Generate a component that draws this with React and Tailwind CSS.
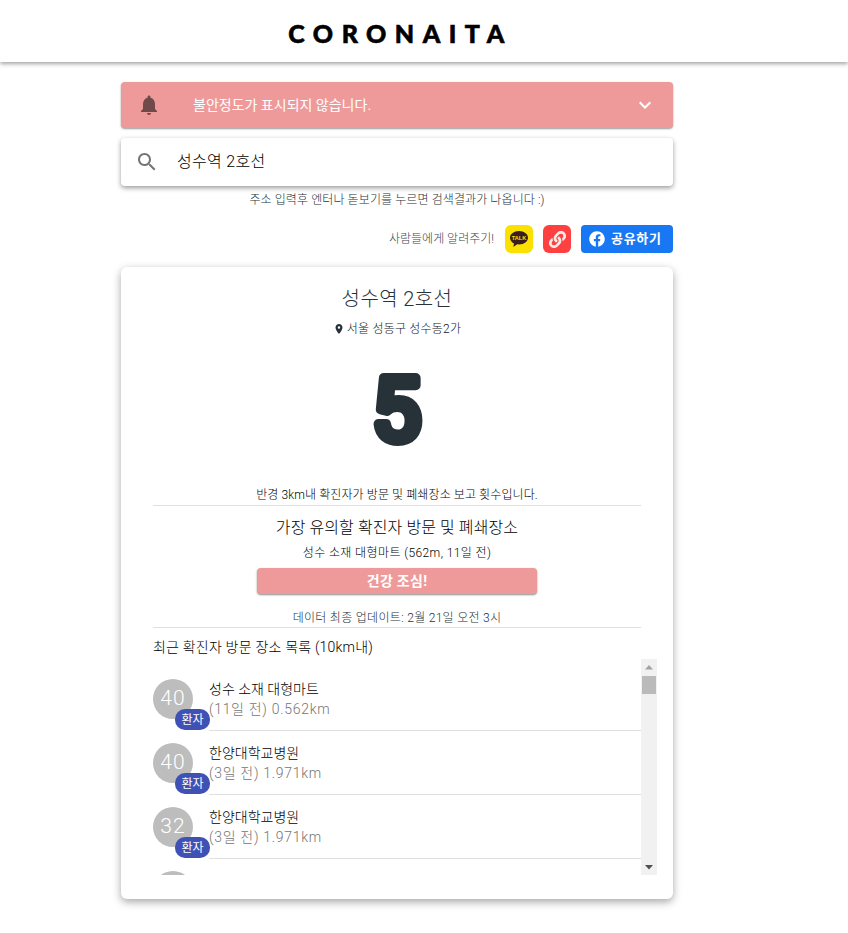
import React from "react";
import { FaFacebook, FaLink } from "react-icons/fa";

const Bell = () => (
  <svg width="24" height="24" viewBox="0 0 24 24" className="text-[#704a4a]" fill="currentColor"><path d="M12 22c1.1 0 2-.9 2-2h-4c0 1.1.89 2 2 2zm6-6v-5c0-3.07-1.64-5.64-4.5-6.32V4c0-.83-.67-1.5-1.5-1.5s-1.5.67-1.5 1.5v.68C7.63 5.36 6 7.92 6 11v5l-2 2v1h16v-1l-2-2z"/></svg>
);
const Chevron = () => (
  <svg width="24" height="24" viewBox="0 0 24 24" fill="#fff"><path d="M16.59 8.59 12 13.17 7.41 8.59 6 10l6 6 6-6z"/></svg>
);
const Search = () => (
  <svg width="24" height="24" viewBox="0 0 24 24" fill="#757575"><path d="M15.5 14h-.79l-.28-.27C15.41 12.59 16 11.11 16 9.5 16 5.91 13.09 3 9.5 3S3 5.91 3 9.5 5.91 16 9.5 16c1.61 0 3.09-.59 4.23-1.57l.27.28v.79l5 4.99L20.49 19l-4.99-5zm-6 0C7.01 14 5 11.99 5 9.5S7.01 5 9.5 5 14 7.01 14 9.5 11.99 14 9.5 14z"/></svg>
);
const Pin = () => (
  <svg width="12" height="12" viewBox="0 0 24 24" fill="#263238"><path d="M12 2C8.13 2 5 5.13 5 9c0 5.25 7 13 7 13s7-7.75 7-13c0-3.87-3.13-7-7-7zm0 9.5a2.5 2.5 0 0 1 0-5 2.5 2.5 0 0 1 0 5z"/></svg>
);
const Kakao = () => (
  <svg width="20" height="20" viewBox="0 0 20 20"><path fill="#3c1e1e" d="M10 2C4.9 2 1 5 1 8.7c0 2.4 1.600 4.500 4 5.700L4.300 18l3.900-2.700c.6.1 1.200.1 1.800.1 5.100 0 9-3 9-6.700S15.100 2 10 2z"/><text x="10" y="10.800" textAnchor="middle" fontSize="5.500" fontWeight="700" fill="#fae100" fontFamily="Liberation Sans">TALK</text></svg>
);
const Up = ({ color }) => (
  <svg width="16" height="16" viewBox="0 0 16 16" fill={color}><path d="M4 10.500 8 6l4 4.500z"/></svg>
);
const Down = ({ color }) => (
  <svg width="16" height="16" viewBox="0 0 16 16" fill={color}><path d="M4 6l4 4.500L12 6z"/></svg>
);

const rows = [
  ["40", "성수 소재 대형마트", "(11일 전) 0.562km"],
  ["40", "한양대학교병원", "(3일 전) 1.971km"],
  ["32", "한양대학교병원", "(3일 전) 1.971km"],
];

function Avatar({ n }) {
  return <div className="flex h-10 w-10 items-center justify-center rounded-full bg-[#bdbdbd] text-[21px] font-light tracking-[1px] text-white">{n}</div>;
}

function Row({ n, title, sub }) {
  return (
    <div className="flex h-16 shrink-0">
      <div className="relative w-14 shrink-0 pt-3">
        <Avatar n={n} />
        <div className="absolute left-[22px] top-[42px] flex h-[21px] w-[35px] items-center justify-center rounded-[10px] bg-[#3f51b5] text-xs text-white">환자</div>
      </div>
      <div className="min-w-0 flex-1 border-b border-[#e0e0e0] pt-[12px]">
        <div className="text-sm font-light leading-5 text-black">{title}</div>
        <div className="text-sm font-light leading-5 tracking-[0.7px] text-[#757575]">{sub}</div>
      </div>
    </div>
  );
}

export default function App() {
  return (
    <div className="min-h-[933px] bg-white font-['Roboto','Noto_Sans_CJK_KR',sans-serif] text-[#212121]">
      <header className="h-[62px] bg-white shadow-[0_2px_4px_rgba(0,0,0,0.35)]">
        <div className="flex h-full w-[794px] items-center justify-center pt-[5px] pl-[7px] font-['Lato',sans-serif] text-[25px] font-black tracking-[8.500px] text-black [-webkit-text-stroke:0.6px_black]">CORONAITA</div>
      </header>
      <main className="ml-[121px] flex w-[552px] flex-col pt-5">
        <div className="flex h-[46px] items-center rounded bg-[#ef9a9a] pl-4 pr-4 shadow-[0_1px_2px_rgba(0,0,0,0.4)]">
          <Bell />
          <div className="ml-[32px] flex-1 text-sm text-white">불안정도가 표시되지 않습니다.</div>
          <Chevron />
        </div>
        <div className="mt-[10px] flex h-12 items-center rounded bg-white pl-[14px] shadow-[0_2px_5px_rgba(0,0,0,0.4)]">
          <Search />
          <div className="ml-[18px] text-base font-light tracking-[0.3px] text-black">성수역 2호선</div>
        </div>
        <p className="mt-[6px] text-center text-xs font-light leading-4 tracking-[0.1px] text-[#263238]">주소 입력후 엔터나 돋보기를 누르면 검색결과가 나옵니다 :)</p>
        <div className="mt-[17px] flex h-7 items-center justify-end">
          <span className="text-xs font-light text-[#37474f]">사람들에게 알려주기!</span>
          <div className="ml-[11px] flex h-7 w-7 items-center justify-center rounded-md bg-[#fae100]"><Kakao /></div>
          <div className="ml-[10px] flex h-7 w-7 items-center justify-center rounded-md bg-[#ff4040]"><FaLink size={17} color="#ffe9e9" /></div>
          <div className="ml-[10px] flex h-7 w-[92px] items-center gap-[6px] rounded bg-[#1877f2] pl-2 text-[13px] font-bold tracking-[0.7px] text-white"><FaFacebook size={16} />공유하기</div>
        </div>
        <section className="mt-[14px] h-[632px] rounded-md bg-white px-8 pt-[17px] shadow-[0_3px_8px_rgba(0,0,0,0.35)]">
          <h1 className="text-center text-xl font-light leading-[30px] tracking-[0.4px] text-[#263238]">성수역 2호선</h1>
          <div className="mt-[7px] flex items-center justify-center gap-[2px] text-xs font-light leading-4 tracking-[0.2px] text-[#102027]"><Pin />서울 성동구 성수동2가</div>
          <div className="flex h-[150px] justify-center">
            <svg width="70" height="150" viewBox="0 0 70 150">
              <text x="34.500" y="103" textAnchor="middle" fontFamily="Roboto" fontWeight="400" fontSize="87" fill="#263238" stroke="#263238" strokeWidth="10" strokeLinejoin="round">5</text>
            </svg>
          </div>
          <p className="text-center text-xs font-light leading-4 tracking-[0.1px] text-black">반경 3km내 확진자가 방문 및 폐쇄장소 보고 횟수입니다.</p>
          <hr className="mt-[2px] border-[#e0e0e0]" />
          <h2 className="mt-[12px] text-center text-base font-light leading-5 tracking-[0.1px] text-black">가장 유의할 확진자 방문 및 폐쇄장소</h2>
          <p className="mt-[7px] text-center text-xs font-light leading-4 tracking-[0.4px] text-black">성수 소재 대형마트 (562m, 11일 전)</p>
          <div className="mx-auto mt-[7px] flex h-[26px] w-[280px] items-center justify-center rounded bg-[#ef9a9a] text-sm font-bold tracking-[0.3px] text-white shadow-[0_1px_2px_rgba(0,0,0,0.45)]">건강 조심!</div>
          <p className="mt-[16px] text-center text-xs font-light leading-4 tracking-[0.3px] text-[#263238]">데이터 최종 업데이트: 2월 21일 오전 3시</p>
          <hr className="mt-[1px] border-[#e0e0e0]" />
          <div className="mt-[9px] text-sm font-light leading-5 tracking-[0.2px] text-black">최근 확진자 방문 장소 목록 (10km내)</div>
          <div className="relative mr-[-16px] mt-[2px] h-[216px] overflow-hidden pr-4 pt-2">
            {rows.map((r, i) => <Row key={i} n={r[0]} title={r[1]} sub={r[2]} />)}
            <div className="pt-3"><div className="h-10 w-10 rounded-full bg-[#bdbdbd]" /></div>
            <div className="absolute bottom-0 right-0 top-0 flex w-4 flex-col bg-[#f1f1f1]">
              <Up color="#a3a3a3" />
              <div className="ml-px mt-px h-[18px] w-[14px] bg-[#bababa]" />
              <div className="flex-1" />
              <Down color="#505050" />
            </div>
          </div>
        </section>
      </main>
    </div>
  );
}
